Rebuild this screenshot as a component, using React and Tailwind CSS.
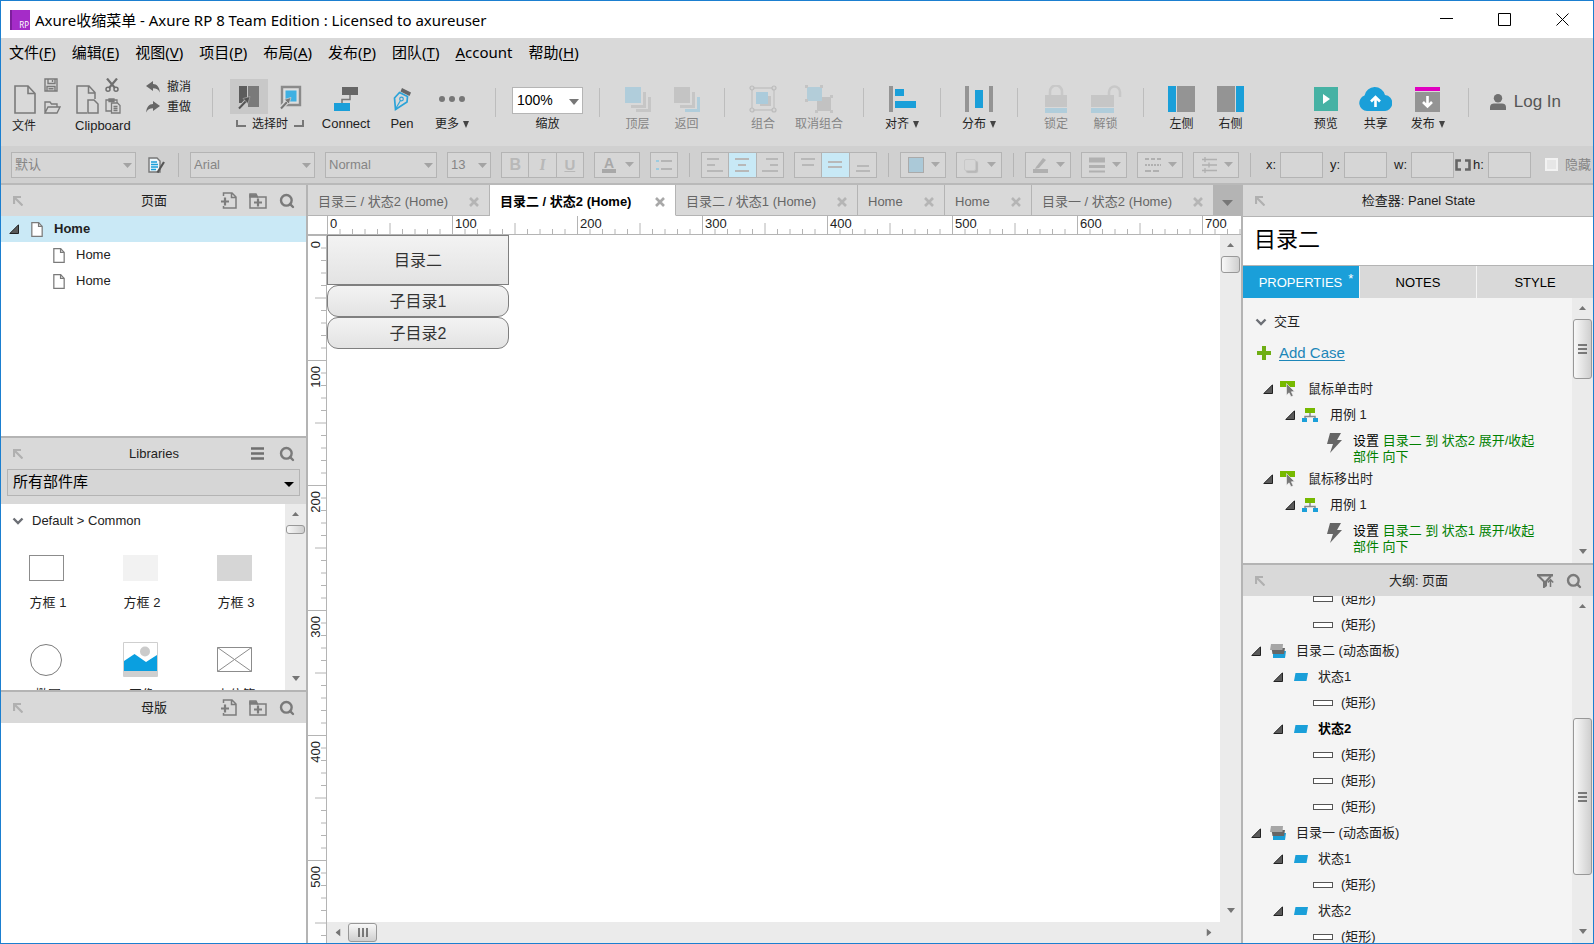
import { Search } from "lucide-react";

const ui = "font-['Liberation_Sans','Noto_Sans_CJK_SC',sans-serif]";
const system = "font-['Noto_Sans','Noto_Sans_CJK_SC',sans-serif]";

const range = (n) => Array.from({ length: n }, (_, i) => i);

/* ---------- icons ---------- */

function Caret({ className }) {
  return (
    <svg viewBox="0 0 10 6" preserveAspectRatio="none" className={className}>
      <path d="M0 0h10L5 6z" fill="currentColor" />
    </svg>
  );
}

function Twisty() {
  return (
    <svg viewBox="0 0 10 10" className="size-[10px] shrink-0">
      <path d="M9.500 .8V9.500H.8z" fill="#5a5a5a" stroke="#222" />
    </svg>
  );
}

function Chevron() {
  return (
    <svg viewBox="0 0 12 8" className="h-2 w-3 shrink-0">
      <path d="M1.500 1.500 6 6l4.500-4.500" fill="none" stroke="#6c6f75" strokeWidth="2.400" />
    </svg>
  );
}

function PageIcon({ className, strokeWidth = 1.6, fill = "none" }) {
  return (
    <svg viewBox="0 0 22 29" className={className}>
      <path d="M1 1h13l7 7.500V28H1z" fill={fill} stroke="#7a7a7a" strokeWidth={strokeWidth} />
      <path d="M14 1v7.500h7" fill="none" stroke="#7a7a7a" strokeWidth={strokeWidth} />
    </svg>
  );
}

function SaveIcon() {
  return (
    <svg viewBox="0 0 14 14" className="size-[14px]" fill="none" stroke="#7a7a7a" strokeWidth="1.400">
      <path d="M1 1h12v12H1zM4 1v4.500h7V1M8.500 2v2M3 13V8.500h8V13M4.500 10.800h5" />
    </svg>
  );
}

function OpenIcon() {
  return (
    <svg viewBox="0 0 17 13" className="h-[13px] w-[17px]" fill="none" stroke="#7a7a7a" strokeWidth="1.400">
      <path d="M1 12V1h5l1.500 2H13v3M1 12 4 6h12l-3 6z" />
    </svg>
  );
}

function CopyIcon() {
  return (
    <svg viewBox="0 0 23 29" className="h-[29px] w-[23px]" fill="none" stroke="#7a7a7a" strokeWidth="1.500">
      <path d="M11 28H1V1h12l6 6.500V14M12.500 1v7H19" />
      <path d="M12 15h6l4 4v9H12z" fill="#d9d9d9" />
    </svg>
  );
}

function CutIcon() {
  return (
    <svg viewBox="0 0 14 14" className="size-[14px]" fill="none" stroke="#6f6f6f">
      <path d="M2 0.500 10 10M12 .5 4 10" strokeWidth="2.200" />
      <circle cx="3" cy="11.200" r="2" strokeWidth="1.500" />
      <circle cx="11" cy="11.200" r="2" strokeWidth="1.500" />
    </svg>
  );
}

function PasteIcon() {
  return (
    <svg viewBox="0 0 16 16" className="size-4" fill="none" stroke="#7a7a7a" strokeWidth="1.300">
      <path d="M6 13H1V2h11v3M4 1h5v2.500H4z" />
      <path d="M6.500 5h6l2.500 2.500V15h-8.500zM8.500 8.500h4M8.500 10.500h4M8.500 12.500h4" />
    </svg>
  );
}

function UndoIcon({ flip }) {
  return (
    <svg viewBox="0 0 14 12" className={flip ? "h-3 w-[14px] -scale-x-100" : "h-3 w-[14px]"}>
      <path d="M0 5 7 0v3c4 0 6.500 3 6.800 8.500C12.500 8.500 10.500 7.300 7 7.300V10z" fill="#666" />
    </svg>
  );
}

function SelectIntersectIcon() {
  return (
    <svg viewBox="0 0 22 26" className="h-[26px] w-[22px]">
      <path d="M1 2h8v17H1z" fill="#5c5c5c" />
      <path d="M10 2h11v21H10z" fill="#7a7a7a" />
      <path d="M1 24.500 8 17" stroke="#c8c8c8" strokeWidth="4" />
      <path d="M1 24.500 9 16" stroke="#555" strokeWidth="2" />
      <path d="M5 14.500 12 12.500 10 19.500z" fill="#555" stroke="#a8a8a8" strokeWidth=".7" />
    </svg>
  );
}

function SelectContainIcon() {
  return (
    <svg viewBox="0 0 22 26" className="h-[26px] w-[22px]">
      <path d="M2 3h18v18H2z" fill="#dedede" stroke="#8a8a8a" strokeWidth="2.400" />
      <path d="M5.500 6.500h11v11h-11z" fill="#3fb0e2" />
      <path d="M0 25 7 18" stroke="#d9d9d9" strokeWidth="4.500" />
      <path d="M1 24.500 8 17" stroke="#777" strokeWidth="2" />
      <path d="M4.500 15.500 11 13.500 9 20z" fill="#777" stroke="#d9d9d9" strokeWidth=".7" />
    </svg>
  );
}

function ConnectIcon() {
  return (
    <svg viewBox="0 0 24 24" className="size-6">
      <path d="M8 0h16v8H8z" fill="#666" />
      <path d="M16 8v4.500H8V17" fill="none" stroke="#777" strokeWidth="1.500" />
      <path d="M0 16h16v8H0z" fill="#1a9fd9" />
    </svg>
  );
}

function PenIcon() {
  return (
    <svg viewBox="0 0 18 25" className="h-[25px] w-[18px]">
      <path d="M9 1 18 5.500 16.500 9 7.500 4.500z" fill="#666" />
      <path d="M6.500 5.500 14.500 9.500 14 15 2.500 22.500 1.500 11z" fill="none" stroke="#2ba3d8" strokeWidth="1.700" />
      <circle cx="8.500" cy="12" r="1.800" fill="none" stroke="#2ba3d8" strokeWidth="1.200" />
      <path d="m7.500 13.500-5 8.500" stroke="#2ba3d8" strokeWidth="1.200" />
    </svg>
  );
}

function DotsIcon() {
  return (
    <svg viewBox="0 0 26 6" className="h-[6px] w-[26px]" fill="#777">
      <circle cx="3" cy="3" r="3" />
      <circle cx="13" cy="3" r="3" />
      <circle cx="23" cy="3" r="3" />
    </svg>
  );
}

function LayersIcon({ front }) {
  return (
    <svg viewBox="0 0 26 27" className="h-[27px] w-[26px]">
      <path d="M0 1h16v16H0z" fill={front ? "#b0cddb" : "#c4c4c4"} />
      <path d="M18 6h3v16H6v-3h12z" fill="#c6c6c6" />
      <path d="M23 11h3v15H11v-3h12z" fill={front ? "#c6c6c6" : "#b0cddb"} />
    </svg>
  );
}

function GroupIcon() {
  return (
    <svg viewBox="0 0 28 28" className="size-7">
      <path d="M11 11h11v10H11z" fill="#c4c4c4" />
      <path d="M7 7h12v12H7z" fill="#abcbdb" />
      <path d="M3 3h22v22H3z" fill="none" stroke="#c2c2c2" strokeWidth="1.300" />
      <g fill="#d4d4d4" stroke="#bcbcbc" strokeWidth="1.200">
        <circle cx="3" cy="3" r="2" />
        <circle cx="25" cy="3" r="2" />
        <circle cx="3" cy="25" r="2" />
        <circle cx="25" cy="25" r="2" />
      </g>
    </svg>
  );
}

function UngroupIcon() {
  return (
    <svg viewBox="0 0 28 28" className="size-7">
      <path d="M12 12h14v14H12z" fill="#c2c2c2" />
      <path d="M2 2h15v14H2z" fill="#b3cdd9" />
      <g fill="#c4c4c4">
        <path d="M0 0h3v3H0zM15 0h3v3h-3zM0 14h3v3H0zM25 10h3v3h-3zM10 25h3v3h-3zM25 25h3v3h-3z" />
      </g>
    </svg>
  );
}

function AlignIcon() {
  return (
    <svg viewBox="0 0 27 26" className="h-[26px] w-[27px]">
      <path d="M0 0h4v26H0z" fill="#949494" />
      <path d="M6 3h9v7H6zM6 15h21v7H6z" fill="#1a9fd9" />
    </svg>
  );
}

function DistributeIcon() {
  return (
    <svg viewBox="0 0 28 26" className="h-[26px] w-7">
      <path d="M0 0h4v26H0zM24 0h4v26h-4z" fill="#949494" />
      <path d="M10 4h8v18h-8z" fill="#1a9fd9" />
    </svg>
  );
}

function LockIcon({ open }) {
  return (
    <svg viewBox="0 0 32 28" className="h-7 w-8">
      <path
        d={open ? "M19 10V7a5.500 5.500 0 0 1 11 0v5" : "M10 10V6.500a6 6 0 0 1 12 0V10"}
        fill="none"
        stroke="#c8c8c8"
        strokeWidth="2.500"
      />
      <path d={open ? "M1 10h23v12H1z" : "M5 10h22v12H5z"} fill="#c6c6c6" />
      <path d={open ? "M1 23h23v5H1z" : "M5 23h22v5H5z"} fill="#b0cddb" />
    </svg>
  );
}

function SidePanelIcon({ right }) {
  return (
    <svg viewBox="0 0 27 26" className={right ? "h-[26px] w-[27px] -scale-x-100" : "h-[26px] w-[27px]"}>
      <path d="M0 0h8v26H0z" fill="#1a9fd9" />
      <path d="M9 0h18v26H9z" fill="#949494" />
    </svg>
  );
}

function PreviewIcon() {
  return (
    <svg viewBox="0 0 24 24" className="size-6">
      <path d="M0 0h24v24H0z" fill="#46b2a4" />
      <path d="m9 7 7 5-7 5z" fill="#fff" />
    </svg>
  );
}

function ShareIcon() {
  return (
    <svg viewBox="0 0 33 24" className="h-6 w-[33px]">
      <path d="M8 24a8 8 0 0 1-2.500-15.500A10.500 10.500 0 0 1 26 8a8 8 0 0 1-1.500 16z" fill="#1a9fd9" />
      <path d="M16.500 20v-9M12 14.500 16.500 10l4.500 4.500" fill="none" stroke="#fff" strokeWidth="2.600" />
    </svg>
  );
}

function PublishIcon() {
  return (
    <svg viewBox="0 0 25 25" className="size-[25px]">
      <path d="M0 0h25v4H0z" fill="#e000c0" />
      <path d="M0 5h25v20H0z" fill="#949494" />
      <path d="M12.500 9v10M8 15l4.500 4.500L17 15" fill="none" stroke="#fff" strokeWidth="2.600" />
    </svg>
  );
}

function UserIcon() {
  return (
    <svg viewBox="0 0 16 16" className="size-4" fill="#707070">
      <circle cx="8" cy="4.300" r="4.200" />
      <path d="M0 16v-3c0-2.500 2-3.500 4-3.500h8c2 0 4 1 4 3.500v3z" />
    </svg>
  );
}

function DockIcon() {
  return (
    <svg viewBox="0 0 10 10" className="size-[10px] shrink-0" fill="none" stroke="#b0b0b0" strokeWidth="2.200">
      <path d="M1 8V1h7M1.500 1.500 9.500 9.500" />
    </svg>
  );
}

function AddPageIcon() {
  return (
    <svg viewBox="0 0 16 17" className="h-[17px] w-4" fill="none" stroke="#7c7c7c" strokeWidth="1.500">
      <path d="M2.500 4V1h8.500l4 4v11H2.500v-2M10.500 1v4.500H15" />
      <path d="M0 9.500h8M4 5.500v8" strokeWidth="2.200" />
    </svg>
  );
}

function AddFolderIcon() {
  return (
    <svg viewBox="0 0 18 16" className="h-4 w-[18px]" fill="none" stroke="#7c7c7c" strokeWidth="1.500">
      <path d="M1 15V1h6l1.500 3H17v11z" />
      <path d="M1 2h6l1 2H1z" fill="#7c7c7c" />
      <path d="M5 9.500h8M9 5.500v8" strokeWidth="2.200" />
    </svg>
  );
}

function HamburgerIcon() {
  return (
    <svg viewBox="0 0 16 13" className="h-[13px] w-4">
      <path d="M0 1.500h13M0 6.500h13M0 11.500h13" stroke="#6f6f6f" strokeWidth="2.400" />
    </svg>
  );
}

function FilterIcon() {
  return (
    <svg viewBox="0 0 17 14" className="h-[14px] w-[17px]">
      <path d="M0 0h16v2.500H0z" fill="#777" />
      <path d="M1.500 2 7 7.500V13l2-1.500V7.500L14 2" fill="none" stroke="#777" strokeWidth="2" />
      <path d="M13.500 13V6M10.800 8.500l2.700-3 2.700 3" fill="none" stroke="#777" strokeWidth="1.500" />
    </svg>
  );
}

function SearchIcon() {
  return <Search className="size-4 text-[#7a7a7a]" strokeWidth={3.6} />;
}

function EventIcon() {
  return (
    <svg viewBox="0 0 16 16" className="size-4 shrink-0">
      <path d="M0 0h15v6H0z" fill="#76b900" />
      <path d="m6.500 2.500 8 8-3.200.3 1.900 3.900-2.200 1-1.900-3.900-2.600 2.400z" fill="#777" stroke="#f4f4f4" strokeWidth=".6" />
    </svg>
  );
}

function CaseIcon() {
  return (
    <svg viewBox="0 0 16 14" className="h-[14px] w-4 shrink-0">
      <path d="M8 5v3.500M3 11V8.500h10V11" fill="none" stroke="#888" strokeWidth="1.500" />
      <path d="M3 0h10v5H3z" fill="#76b900" />
      <path d="M0 10h5v4H0zM11 10h5v4h-5z" fill="#1a9fd9" />
    </svg>
  );
}

function BoltIcon() {
  return (
    <svg viewBox="0 0 15 20" className="h-5 w-[15px] shrink-0">
      <path d="M3 0h11L10 7h5L3 20l3-9H0z" fill="#666" />
    </svg>
  );
}

function PanelStackIcon() {
  return (
    <svg viewBox="0 0 16 14" className="h-[14px] w-4 shrink-0">
      <path d="m3 7h13l-1 7H3z" fill="#1a9fd9" />
      <path d="M1.500 4H15l-1 6H2.500z" fill="#666" />
      <path d="M1 0h12l-.5 6H0z" fill="#a6a6a6" />
    </svg>
  );
}

function StateIcon() {
  return (
    <svg viewBox="0 0 14 8" className="h-2 w-[14px] shrink-0">
      <path d="M1.500 0H14l-1.500 8H0z" fill="#1a9fd9" />
    </svg>
  );
}

/* ---------- scroll bars ---------- */

const thumbV =
  "mx-px rounded-[3px] border border-[#989898] bg-linear-to-r from-[#f8f8f8] via-[#e4e4e4] to-[#cfcfcf] flex items-center justify-center";

function ScrollV({ thumb, grip }) {
  return (
    <div className="flex w-[21px] shrink-0 flex-col bg-[#ebebeb] text-[#757575]">
      <div className="flex h-5 shrink-0 items-center justify-center">
        <Caret className="h-1 w-[7px] rotate-180" />
      </div>
      <div className="min-h-0 flex-1">
        <div className={`${thumbV} ${thumb}`}>
          {grip && (
            <svg viewBox="0 0 9 10" className="h-[10px] w-[9px]">
              <path d="M0 1h9M0 5h9M0 9h9" stroke="#555" strokeWidth="1.500" />
            </svg>
          )}
        </div>
      </div>
      <div className="flex h-6 shrink-0 items-center justify-center">
        <Caret className="h-[5px] w-2" />
      </div>
    </div>
  );
}

function ScrollH() {
  return (
    <div className="flex h-[21px] shrink-0 items-center bg-[#ebebeb] text-[#757575]">
      <div className="flex w-[21px] justify-center">
        <Caret className="h-[5px] w-2 rotate-90" />
      </div>
      <div className="flex-1">
        <div className="flex h-[19px] w-[29px] items-center justify-center rounded-[3px] border border-[#989898] bg-linear-to-b from-[#f8f8f8] to-[#cfcfcf]">
          <svg viewBox="0 0 10 9" className="h-[9px] w-[10px]">
            <path d="M1 0v9M5 0v9M9 0v9" stroke="#555" strokeWidth="1.500" />
          </svg>
        </div>
      </div>
      <div className="flex w-[45px] justify-center pr-5">
        <Caret className="h-[5px] w-2 -rotate-90" />
      </div>
    </div>
  );
}

/* ---------- title and menu ---------- */

function TitleBar() {
  return (
    <header className={`flex h-[37px] shrink-0 items-center bg-white text-black ${system}`}>
      <div className="ml-[9px] flex size-5 items-end justify-end border-l-2 border-[#7d1f9c] bg-[#a52cc8] pr-px text-[8px] leading-[10px] text-white">
        RP
      </div>
      <h1 className="ml-[5px] text-[15px] leading-5 whitespace-nowrap">
        Axure收缩菜单 - Axure RP 8 Team Edition : Licensed to axureuser
      </h1>
      <div className="mr-[2px] ml-auto flex">
        <button aria-label="Minimize" className="flex h-9 w-[58px] items-center justify-center">
          <svg viewBox="0 0 13 13" className="size-[13px]" stroke="#000" fill="none">
            <path d="M0 5.500h13" />
          </svg>
        </button>
        <button aria-label="Maximize" className="flex h-9 w-[58px] items-center justify-center">
          <svg viewBox="0 0 13 13" className="size-[13px]" stroke="#000" fill="none">
            <path d="M.5.5h12v12H.5z" />
          </svg>
        </button>
        <button aria-label="Close" className="flex h-9 w-[58px] items-center justify-center">
          <svg viewBox="0 0 13 13" className="size-[13px]" stroke="#000" fill="none">
            <path d="m.5.5 12 12M12.500.5l-12 12" />
          </svg>
        </button>
      </div>
    </header>
  );
}

const menus = [
  ["文件(", "F", ")"],
  ["编辑(", "E", ")"],
  ["视图(", "V", ")"],
  ["项目(", "P", ")"],
  ["布局(", "A", ")"],
  ["发布(", "P", ")"],
  ["团队(", "T", ")"],
  ["", "A", "ccount"],
  ["帮助(", "H", ")"],
];

function MenuBar() {
  return (
    <nav className={`flex h-7 shrink-0 items-center gap-4 pl-2 text-[15px] leading-5 text-black ${system}`}>
      {menus.map(([before, key, after]) => (
        <button key={before + after} className="whitespace-nowrap">
          {before}
          <u className="underline-offset-2">{key}</u>
          {after}
        </button>
      ))}
    </nav>
  );
}

/* ---------- toolbar ---------- */

function Sep() {
  return <div className="mx-[13px] mt-1 h-[29px] w-px shrink-0 bg-[#bdbdbd]" />;
}

function Tool({ icon, label, width = "w-[50px]", off, menu }) {
  return (
    <button className={`flex shrink-0 flex-col items-center ${width} ${off ? "text-[#858585]" : "text-[#222]"}`}>
      <span className="flex h-[30px] items-center">{icon}</span>
      <span className="mt-[2px] flex items-center gap-1 leading-4 whitespace-nowrap">
        {label}
        {menu && <Caret className="h-[7px] w-[6px] text-[#444]" />}
      </span>
    </button>
  );
}

function Toolbar() {
  return (
    <div className="flex h-20 shrink-0 pt-[18px] pl-[11px] text-[12px] text-[#222]">
      <div className="w-[63px] shrink-0">
        <div className="-mt-2 flex h-[38px] gap-2 pl-[2px]">
          <button aria-label="New" className="pt-2">
            <PageIcon className="h-[29px] w-[22px]" />
          </button>
          <div className="flex flex-col justify-between pt-[2px]">
            <button aria-label="Save"><SaveIcon /></button>
            <button aria-label="Open"><OpenIcon /></button>
          </div>
        </div>
        <div className="mt-1 leading-4">文件</div>
      </div>
      <div className="w-[71px] shrink-0">
        <div className="-mt-2 flex h-[38px] gap-[6px] pl-px">
          <button aria-label="Copy" className="pt-2"><CopyIcon /></button>
          <div className="flex flex-col justify-between pt-[2px]">
            <button aria-label="Cut"><CutIcon /></button>
            <button aria-label="Paste"><PasteIcon /></button>
          </div>
        </div>
        <div className="mt-1 text-[13px] leading-4">Clipboard</div>
      </div>
      <div className="-mt-[5px] flex w-[53px] shrink-0 flex-col gap-1">
        <button className="flex items-center gap-[7px] leading-4 whitespace-nowrap"><UndoIcon />撤消</button>
        <button className="flex items-center gap-[7px] leading-4 whitespace-nowrap"><UndoIcon flip />重做</button>
      </div>
      <Sep />
      <div className="ml-1 w-20 shrink-0">
        <div className="-mt-[5px] flex h-[35px] gap-1">
          <button aria-label="Select intersected" className="flex w-[38px] items-center justify-center bg-[#c8c8c8]">
            <SelectIntersectIcon />
          </button>
          <button aria-label="Select contained" className="flex w-[38px] items-center justify-center">
            <SelectContainIcon />
          </button>
        </div>
        <div className="mt-[2px] flex items-center justify-center gap-[6px] leading-4">
          <span className="mb-[2px] h-[7px] w-[10px] border-b-2 border-l-2 border-[#777]" />
          选择时
          <span className="mb-[2px] h-[7px] w-[10px] border-r-2 border-b-2 border-[#777]" />
        </div>
      </div>
      <Tool icon={<ConnectIcon />} label={<span className="text-[13px]">Connect</span>} width="w-[72px]" />
      <Tool icon={<PenIcon />} label={<span className="text-[13px]">Pen</span>} width="w-10" />
      <Tool icon={<DotsIcon />} label="更多" width="w-[60px]" menu />
      <Sep />
      <div className="flex w-[77px] shrink-0 flex-col items-center">
        <div className="relative mt-[3px]">
          <select
            id="zoom"
            className="h-[27px] w-[71px] appearance-none border border-[#b5b5b5] bg-white pl-1 text-[14px] text-black"
          >
            <option>100%</option>
          </select>
          <Caret className="pointer-events-none absolute top-[12px] right-1 h-[6px] w-[10px] text-[#777]" />
        </div>
        <label htmlFor="zoom" className="mt-[2px] leading-4">缩放</label>
      </div>
      <Sep />
      <Tool icon={<LayersIcon front />} label="顶层" width="w-[49px]" off />
      <Tool icon={<LayersIcon />} label="返回" width="w-[49px]" off />
      <Sep />
      <Tool icon={<GroupIcon />} label="组合" off />
      <Tool icon={<UngroupIcon />} label="取消组合" width="w-[62px]" off />
      <Sep />
      <Tool icon={<AlignIcon />} label="对齐" menu />
      <Sep />
      <Tool icon={<DistributeIcon />} label="分布" menu />
      <Sep />
      <Tool icon={<LockIcon />} label="锁定" off />
      <Tool icon={<LockIcon open />} label="解锁" width="w-[49px]" off />
      <Sep />
      <Tool icon={<SidePanelIcon />} label="左侧" width="w-[49px]" />
      <Tool icon={<SidePanelIcon right />} label="右侧" width="w-[49px]" />
      <div className="ml-auto flex shrink-0 pr-8">
        <Tool icon={<PreviewIcon />} label="预览" />
        <Tool icon={<ShareIcon />} label="共享" />
        <Tool icon={<PublishIcon />} label="发布" width="w-[54px]" menu />
        <Sep />
        <button className="ml-2 flex h-9 items-center gap-2 text-[17px] whitespace-nowrap text-[#555]">
          <UserIcon />
          Log In
        </button>
      </div>
    </div>
  );
}

/* ---------- format bar ---------- */

const box = "h-[26px] shrink-0 border border-[#b4b4b4] bg-[#d6d6d6]";

function FormatSelect({ label, value, width }) {
  return (
    <div className={`relative shrink-0 ${width}`}>
      <select
        aria-label={label}
        className="h-[26px] w-full appearance-none border border-[#b4b4b4] bg-[#d6d6d6] pl-[3px] text-[13px] text-[#858585]"
      >
        <option>{value}</option>
      </select>
      <Caret className="pointer-events-none absolute top-[11px] right-1 h-[5px] w-[9px] text-[#a3a3a3]" />
    </div>
  );
}

function FormatMenu({ label, children }) {
  return (
    <button aria-label={label} className={`${box} flex w-[46px] items-center justify-between pr-[5px] pl-[7px] text-[#a8a8a8]`}>
      {children}
      <Caret className="h-[5px] w-[9px]" />
    </button>
  );
}

function Segments({ items }) {
  return (
    <div className={`${box} flex w-[83px] divide-x divide-[#b4b4b4]`}>
      {items.map(({ name, icon, on }) => (
        <button
          key={name}
          aria-label={name}
          className={`flex flex-1 items-center justify-center text-[#b8b8b8] ${on ? "bg-[#c8e9f6]" : ""}`}
        >
          {icon}
        </button>
      ))}
    </div>
  );
}

function Lines({ d }) {
  return (
    <svg viewBox="0 0 16 16" className="size-4">
      <path d={d} stroke="currentColor" strokeWidth="2" fill="none" />
    </svg>
  );
}

function FormatSep() {
  return <div className="mx-px h-6 w-px shrink-0 bg-[#b5b5b5]" />;
}

function Field({ name, width }) {
  return (
    <label className={`flex shrink-0 items-center justify-between text-[13px] text-[#222] ${width}`}>
      {name}:
      <input type="text" className="h-[26px] w-[43px] border border-[#b4b4b4] bg-[#d6d6d6]" />
    </label>
  );
}

function FormatBar() {
  return (
    <div className="flex h-[39px] shrink-0 items-center gap-[10px] overflow-hidden border-b-2 border-[#b9b9b9] bg-[#d0d0d0] pl-[10px]">
      <FormatSelect label="Style" value="默认" width="w-[125px]" />
      <button aria-label="Manage styles" className="flex w-[21px] shrink-0 justify-center">
        <svg viewBox="0 0 17 16" className="h-4 w-[17px]">
          <path d="M1 1h8l3 3v11H1z" fill="#eef6fa" stroke="#777" strokeWidth="1.400" />
          <path d="M3 5h6M3 7.500h7M3 10h7M3 12.500h5" stroke="#1a9fd9" strokeWidth="1.300" />
          <path d="m16 5-5 8-1.500 2.500" stroke="#555" strokeWidth="2.200" />
        </svg>
      </button>
      <FormatSep />
      <FormatSelect label="Font" value="Arial" width="w-[125px]" />
      <FormatSelect label="Weight" value="Normal" width="w-[112px]" />
      <FormatSelect label="Size" value="13" width="w-[44px]" />
      <Segments
        items={[
          { name: "Bold", icon: <b className="text-[16px] leading-4">B</b> },
          { name: "Italic", icon: <i className="font-serif text-[16px] leading-4 font-bold">I</i> },
          { name: "Underline", icon: <u className="text-[15px] leading-4 font-bold">U</u> },
        ]}
      />
      <FormatMenu label="Text color">
        <span className="border-b-4 border-[#a8a8a8] px-[2px] text-[14px] leading-3 font-bold">A</span>
      </FormatMenu>
      <button aria-label="Bullets" className={`${box} flex w-7 items-center justify-center`}>
        <svg viewBox="0 0 16 12" className="h-3 w-4" strokeWidth="2">
          <path d="M0 2h3M0 10h3" stroke="#9ccbe0" />
          <path d="M5 2h11M5 10h11" stroke="#b5b5b5" />
        </svg>
      </button>
      <FormatSep />
      <Segments
        items={[
          { name: "Align left", icon: <Lines d="M0 2h12M0 8h8M0 14h16" /> },
          { name: "Align center", icon: <Lines d="M1 2h14M4 8h8M1 14h14" />, on: true },
          { name: "Align right", icon: <Lines d="M4 2h12M8 8h8M0 14h16" /> },
        ]}
      />
      <Segments
        items={[
          { name: "Align top", icon: <Lines d="M1 2h14M2 8h12" /> },
          { name: "Align middle", icon: <Lines d="M1 5h14M1 10h14" />, on: true },
          { name: "Align bottom", icon: <Lines d="M2 9h12M1 14h14" /> },
        ]}
      />
      <FormatSep />
      <FormatMenu label="Fill">
        <span className="size-4 border border-[#aaa] bg-[#abc9d8]" />
      </FormatMenu>
      <FormatMenu label="Shadow">
        <span className="size-3 rounded-[2px] border border-[#c8c8c8] bg-[#d6d6d6] shadow-[2px_2px_1px_#b8b8b8]" />
      </FormatMenu>
      <FormatSep />
      <FormatMenu label="Line color">
        <svg viewBox="0 0 16 16" className="size-4">
          <path d="M3 10 10 1l3 2-7 8-4 1z" fill="#b0b0b0" />
          <path d="M0 12h15v4H0z" fill="#b0b0b0" />
        </svg>
      </FormatMenu>
      <FormatMenu label="Line width">
        <svg viewBox="0 0 16 16" className="size-4" stroke="#b0b0b0">
          <path d="M0 3h16" strokeWidth="5" />
          <path d="M0 9.500h16" strokeWidth="3" />
          <path d="M0 14.500h16" strokeWidth="2" />
        </svg>
      </FormatMenu>
      <FormatMenu label="Line style">
        <svg viewBox="0 0 16 16" className="size-4" stroke="#b0b0b0" strokeWidth="2">
          <path d="M0 2h16" strokeDasharray="4 2" />
          <path d="M0 8h16" strokeDasharray="2 1" />
          <path d="M0 14h16" strokeDasharray="6 2" />
        </svg>
      </FormatMenu>
      <FormatMenu label="Arrow style">
        <svg viewBox="0 0 16 16" className="size-4" stroke="#b0b0b0" strokeWidth="1.300" fill="none">
          <path d="M1 2.500h15M4 0v5M1 8h15M8 5.500v5M1 13.500h15M4 11v5" />
        </svg>
      </FormatMenu>
      <FormatSep />
      <div className="flex shrink-0 items-center gap-[7px] pl-1">
        <Field name="x" width="w-[57px]" />
        <Field name="y" width="w-[57px]" />
        <Field name="w" width="w-[60px]" />
      </div>
      <div className="-ml-[9px] flex shrink-0 items-center gap-[2px]">
        <svg viewBox="0 0 16 12" className="h-3 w-4" fill="none" stroke="#666" strokeWidth="2.600">
          <path d="M6 1.500H1.500v9H6M10 1.500h4.500v9H10" />
        </svg>
        <Field name="h" width="w-[58px]" />
      </div>
      <label className="ml-1 flex shrink-0 items-center gap-[7px] text-[13px] leading-4 whitespace-nowrap text-[#858585]">
        <input type="checkbox" className="size-[13px] appearance-none border-2 border-[#f2f2f2] bg-[#e6e6e6]" />
        隐藏
      </label>
    </div>
  );
}

/* ---------- left column ---------- */

function PanelHeader({ title, children }) {
  return (
    <div className="flex h-[31px] shrink-0 items-center bg-[#d9d9d9] pr-[11px] pl-3 text-[13px] leading-4 text-[#222]">
      <div className="flex flex-1">
        <DockIcon />
      </div>
      <h2 className="pt-px">{title}</h2>
      <div className="flex flex-1 items-center justify-end gap-3">{children}</div>
    </div>
  );
}

function IconButton({ label, children }) {
  return <button aria-label={label}>{children}</button>;
}

function Pages() {
  return (
    <section className="flex h-[251px] shrink-0 flex-col bg-white">
      <PanelHeader title="页面">
        <IconButton label="Add page"><AddPageIcon /></IconButton>
        <IconButton label="Add folder"><AddFolderIcon /></IconButton>
        <IconButton label="Search pages"><SearchIcon /></IconButton>
      </PanelHeader>
      <ul className="text-[13px] leading-4 text-[#222]">
        <li className="flex h-[26px] items-center bg-[#cae9f6] pl-2 font-bold">
          <Twisty />
          <PageIcon className="mr-[11px] ml-3 h-[15px] w-3" strokeWidth={2.4} fill="#fff" />
          Home
        </li>
        {range(2).map((i) => (
          <li key={i} className="flex h-[26px] items-center pl-[52px]">
            <PageIcon className="mr-[11px] h-[15px] w-3" strokeWidth={2.4} />
            Home
          </li>
        ))}
      </ul>
    </section>
  );
}

const widgets = [
  { name: "方框 1", art: <div className="h-[26px] w-[35px] border border-[#8c8c8c] bg-white" /> },
  { name: "方框 2", art: <div className="h-[26px] w-[35px] bg-[#f2f2f2]" /> },
  { name: "方框 3", art: <div className="h-[26px] w-[35px] bg-[#d6d6d6]" /> },
  { name: "椭圆", art: <div className="size-8 rounded-full border border-[#7c7c7c]" /> },
  {
    name: "图像",
    art: (
      <svg viewBox="0 0 35 35" className="size-[35px]">
        <path d="M.5.5h34v34H.5z" fill="#fff" stroke="#cfcfcf" />
        <path d="M1 28h33v6H1z" fill="#cfcfcf" />
        <circle cx="22" cy="9.500" r="5" fill="#cbcbcb" />
        <path d="M1 19 11.500 12 23 20l11-7v16H1z" fill="#0a9fe0" />
      </svg>
    ),
  },
  {
    name: "占位符",
    art: (
      <svg viewBox="0 0 35 25" className="h-[25px] w-[35px]" fill="none" stroke="#8c8c8c">
        <path d="M.5.5h34v24H.5zM.5.5l34 24M34.500.5l-34 24" />
      </svg>
    ),
  },
];

function Libraries() {
  return (
    <section className="flex h-[254px] shrink-0 flex-col overflow-hidden border-t-2 border-[#b4b4b4] bg-white">
      <PanelHeader title="Libraries">
        <IconButton label="Library options"><HamburgerIcon /></IconButton>
        <IconButton label="Search libraries"><SearchIcon /></IconButton>
      </PanelHeader>
      <div className="h-[35px] shrink-0 bg-[#d9d9d9] px-[6px]">
        <div className="relative">
          <select
            aria-label="Library"
            className="h-[27px] w-full appearance-none border border-[#b4b4b4] bg-[#d6d6d6] pl-[5px] text-[15px] text-black"
          >
            <option>所有部件库</option>
          </select>
          <Caret className="pointer-events-none absolute top-[13px] right-[6px] h-[5px] w-[10px] text-black" />
        </div>
      </div>
      <div className="flex min-h-0 flex-1">
        <div className="min-w-0 flex-1 overflow-hidden text-[13px] leading-4 text-[#222]">
          <button className="mt-[9px] ml-[11px] flex items-center gap-2">
            <Chevron />
            Default &gt; Common
          </button>
          <ul className="mt-[17px] mr-[2px] grid grid-cols-3">
            {widgets.map((w) => (
              <li key={w.name} className="flex h-[92px] flex-col items-center">
                <div className="flex h-[43px] items-center pr-1">{w.art}</div>
                <span className="mt-[6px]">{w.name}</span>
              </li>
            ))}
          </ul>
        </div>
        <ScrollV thumb="mt-px h-[9px]" />
      </div>
    </section>
  );
}

function Masters() {
  return (
    <section className="flex min-h-0 flex-1 flex-col border-t-2 border-[#b4b4b4] bg-white">
      <PanelHeader title="母版">
        <IconButton label="Add master"><AddPageIcon /></IconButton>
        <IconButton label="Add folder"><AddFolderIcon /></IconButton>
        <IconButton label="Search masters"><SearchIcon /></IconButton>
      </PanelHeader>
    </section>
  );
}

/* ---------- canvas ---------- */

const tabs = [
  { name: "目录三 / 状态2 (Home)", width: "w-[182px]" },
  { name: "目录二 / 状态2 (Home)", width: "w-[186px]", active: true },
  { name: "目录二 / 状态1 (Home)", width: "w-[182px]" },
  { name: "Home", width: "w-[87px]" },
  { name: "Home", width: "w-[87px]" },
  { name: "目录一 / 状态2 (Home)", width: "w-[182px]" },
];

function Tabs() {
  return (
    <div className="flex h-[31px] shrink-0 overflow-hidden text-[13px] leading-4">
      {tabs.map((t, i) => (
        <div
          key={i}
          className={`flex shrink-0 items-center justify-between border-r border-b border-r-[#b4b4b4] px-[10px] pt-[3px] whitespace-nowrap ${t.width} ${
            t.active ? "border-b-white bg-white font-bold text-black" : "border-b-[#b4b4b4] bg-[#d9d9d9] text-[#666]"
          }`}
        >
          <button>{t.name}</button>
          <button aria-label="Close tab">
            <svg viewBox="0 0 10 10" className="size-[10px]">
              <path d="m1 1 8 8M9 1 1 9" stroke={t.active ? "#a8a8a8" : "#b5b5b5"} strokeWidth="2.600" />
            </svg>
          </button>
        </div>
      ))}
      <button aria-label="All tabs" className="flex flex-1 items-center justify-center bg-[#b4b4b4] pt-1 text-[#777]">
        <Caret className="h-[6px] w-[11px]" />
      </button>
    </div>
  );
}

function RulerX() {
  return (
    <div className="flex h-[19px] flex-1 overflow-hidden border-b border-[#b4b4b4]">
      {range(8).map((n) => (
        <div key={n} className="relative w-[125px] shrink-0">
          <svg viewBox="0 0 125 18" className="h-[18px] w-[125px]" stroke="#b4b4b4">
            <path d="M.5 0v18M63 7v11" />
            {[1, 2, 3, 4, 6, 7, 8, 9].map((k) => (
              <path key={k} d={`M${k * 12.5 + 0.5} 13v5`} />
            ))}
          </svg>
          <span className="absolute top-0 left-[3px] text-[13px] leading-4 text-[#222]">{n * 100}</span>
        </div>
      ))}
    </div>
  );
}

function RulerY() {
  return (
    <div className="flex w-[19px] shrink-0 flex-col overflow-hidden border-r border-[#b4b4b4] bg-white">
      {range(6).map((n) => (
        <div key={n} className="relative h-[125px] shrink-0">
          <svg viewBox="0 0 18 125" className="h-[125px] w-[18px]" stroke="#b4b4b4">
            <path d="M0 .5h18M7 63h11" />
            {[1, 2, 3, 4, 6, 7, 8, 9].map((k) => (
              <path key={k} d={`M13 ${k * 12.5 + 0.5}h5`} />
            ))}
          </svg>
          <span className="absolute top-[6px] left-0 rotate-180 text-[13px] leading-4 text-[#222] [writing-mode:vertical-rl]">
            {n * 100}
          </span>
        </div>
      ))}
    </div>
  );
}

const shape =
  "flex w-[182px] items-center justify-center border border-[#7f7f7f] bg-linear-to-b from-[#f3f3f3] to-[#e3e3e3] pt-px text-[16px] leading-5 text-[#333]";

function Canvas() {
  return (
    <main className="flex min-w-0 flex-1 flex-col bg-white">
      <Tabs />
      <div className="flex shrink-0">
        <div className="w-[19px] shrink-0 border-b border-[#b4b4b4]" />
        <RulerX />
      </div>
      <div className="flex min-h-0 flex-1">
        <RulerY />
        <div className="flex min-w-0 flex-1 flex-col">
          <div className="flex min-h-0 flex-1">
            <div className="min-w-0 flex-1">
              <div className={`${shape} h-[50px]`}>目录二</div>
              <div className={`${shape} h-8 rounded-[11px]`}>子目录1</div>
              <div className={`${shape} h-8 rounded-[11px]`}>子目录2</div>
            </div>
            <ScrollV thumb="mt-px h-[17px]" />
          </div>
          <ScrollH />
        </div>
      </div>
    </main>
  );
}

/* ---------- right column ---------- */

function InteractionEvent({ name, state }) {
  return (
    <>
      <li className="flex h-[26px] items-center pl-5">
        <Twisty />
        <span className="mr-3 ml-[7px] flex"><EventIcon /></span>
        {name}
      </li>
      <li className="flex h-[26px] items-center pl-[42px]">
        <Twisty />
        <span className="mr-3 ml-[7px] flex"><CaseIcon /></span>
        用例 1
      </li>
      <li className="flex h-[38px] gap-[11px] pt-[5px] pl-[84px]">
        <BoltIcon />
        <p className="w-[190px] text-[#008000]">
          <span className="text-black">设置</span> 目录二 到 {state} 展开/收起
          <br />
          部件 向下
        </p>
      </li>
    </>
  );
}

function Inspector() {
  return (
    <section className="flex h-[378px] shrink-0 flex-col">
      <PanelHeader title="检查器: Panel State" />
      <h3 className="h-[50px] shrink-0 border-y border-[#b4b4b4] bg-white pl-[11px] text-[22px] leading-[46px] text-black">
        目录二
      </h3>
      <div className="grid h-8 shrink-0 grid-cols-3 gap-px bg-[#f4f4f4] text-[13px] leading-4 text-black">
        <button className="flex items-center justify-center gap-[6px] bg-[#1a9fd9] pt-px pl-[10px] text-white">
          PROPERTIES
          <span className="mb-2">*</span>
        </button>
        <button className="bg-[#d9d9d9] pt-px">NOTES</button>
        <button className="bg-[#d9d9d9] pt-px">STYLE</button>
      </div>
      <div className="flex min-h-0 flex-1 bg-[#f4f4f4]">
        <div className="min-w-0 flex-1 overflow-hidden text-[13px] leading-4 text-[#222]">
          <button className="mt-4 ml-3 flex items-center gap-[7px]">
            <Chevron />
            交互
          </button>
          <div className="mt-[11px] mb-[11px] ml-[14px] flex h-6 items-center gap-2">
            <svg viewBox="0 0 14 14" className="size-[14px]">
              <path d="M7 0v14M0 7h14" stroke="#6fae14" strokeWidth="4" />
            </svg>
            <a href="#add-case" className="text-[15px] leading-5 text-[#1c86b8] underline underline-offset-2">
              Add Case
            </a>
          </div>
          <ul>
            <InteractionEvent name="鼠标单击时" state="状态2" />
            <InteractionEvent name="鼠标移出时" state="状态1" />
          </ul>
        </div>
        <ScrollV thumb="mt-px h-[60px]" grip />
      </div>
    </section>
  );
}

const outline = [
  { kind: "rect" },
  { kind: "rect" },
  { kind: "panel", name: "目录二 (动态面板)" },
  { kind: "state", name: "状态1" },
  { kind: "rect" },
  { kind: "state", name: "状态2", bold: true },
  { kind: "rect" },
  { kind: "rect" },
  { kind: "rect" },
  { kind: "panel", name: "目录一 (动态面板)" },
  { kind: "state", name: "状态1" },
  { kind: "rect" },
  { kind: "state", name: "状态2" },
  { kind: "rect" },
];

function OutlineRow({ kind, name, bold }) {
  if (kind === "panel") {
    return (
      <li className="flex h-[26px] items-center pl-2">
        <Twisty />
        <span className="mr-[10px] ml-[9px] flex"><PanelStackIcon /></span>
        {name}
      </li>
    );
  }
  if (kind === "state") {
    return (
      <li className={`flex h-[26px] items-center pl-[30px] ${bold ? "font-bold text-black" : ""}`}>
        <Twisty />
        <span className="mr-[10px] ml-[11px] flex"><StateIcon /></span>
        {name}
      </li>
    );
  }
  return (
    <li className="flex h-[26px] items-center gap-2 pl-[70px]">
      <span className="h-[6px] w-5 border border-[#555] bg-white" />
      (矩形)
    </li>
  );
}

function Outline() {
  return (
    <section className="flex min-h-0 flex-1 flex-col border-t-2 border-[#b4b4b4]">
      <PanelHeader title="大纲: 页面">
        <IconButton label="Filter"><FilterIcon /></IconButton>
        <IconButton label="Search outline"><SearchIcon /></IconButton>
      </PanelHeader>
      <div className="flex min-h-0 flex-1 bg-[#f4f4f4]">
        <div className="min-w-0 flex-1 overflow-hidden">
          <ul className="-mt-[10px] text-[13px] leading-4 text-[#222]">
            {outline.map((row, i) => (
              <OutlineRow key={i} {...row} />
            ))}
          </ul>
        </div>
        <ScrollV thumb="mt-[102px] h-[157px]" grip />
      </div>
    </section>
  );
}

export default function App() {
  return (
    <div className={`flex h-screen flex-col overflow-hidden border border-[#1b7fd0] bg-[#d9d9d9] ${ui}`}>
      <TitleBar />
      <MenuBar />
      <Toolbar />
      <FormatBar />
      <div className="flex min-h-0 flex-1">
        <aside className="flex w-[307px] shrink-0 flex-col border-r-2 border-[#b4b4b4]">
          <Pages />
          <Libraries />
          <Masters />
        </aside>
        <Canvas />
        <aside className="flex w-[352px] shrink-0 flex-col border-l-2 border-[#b4b4b4]">
          <Inspector />
          <Outline />
        </aside>
      </div>
    </div>
  );
}
